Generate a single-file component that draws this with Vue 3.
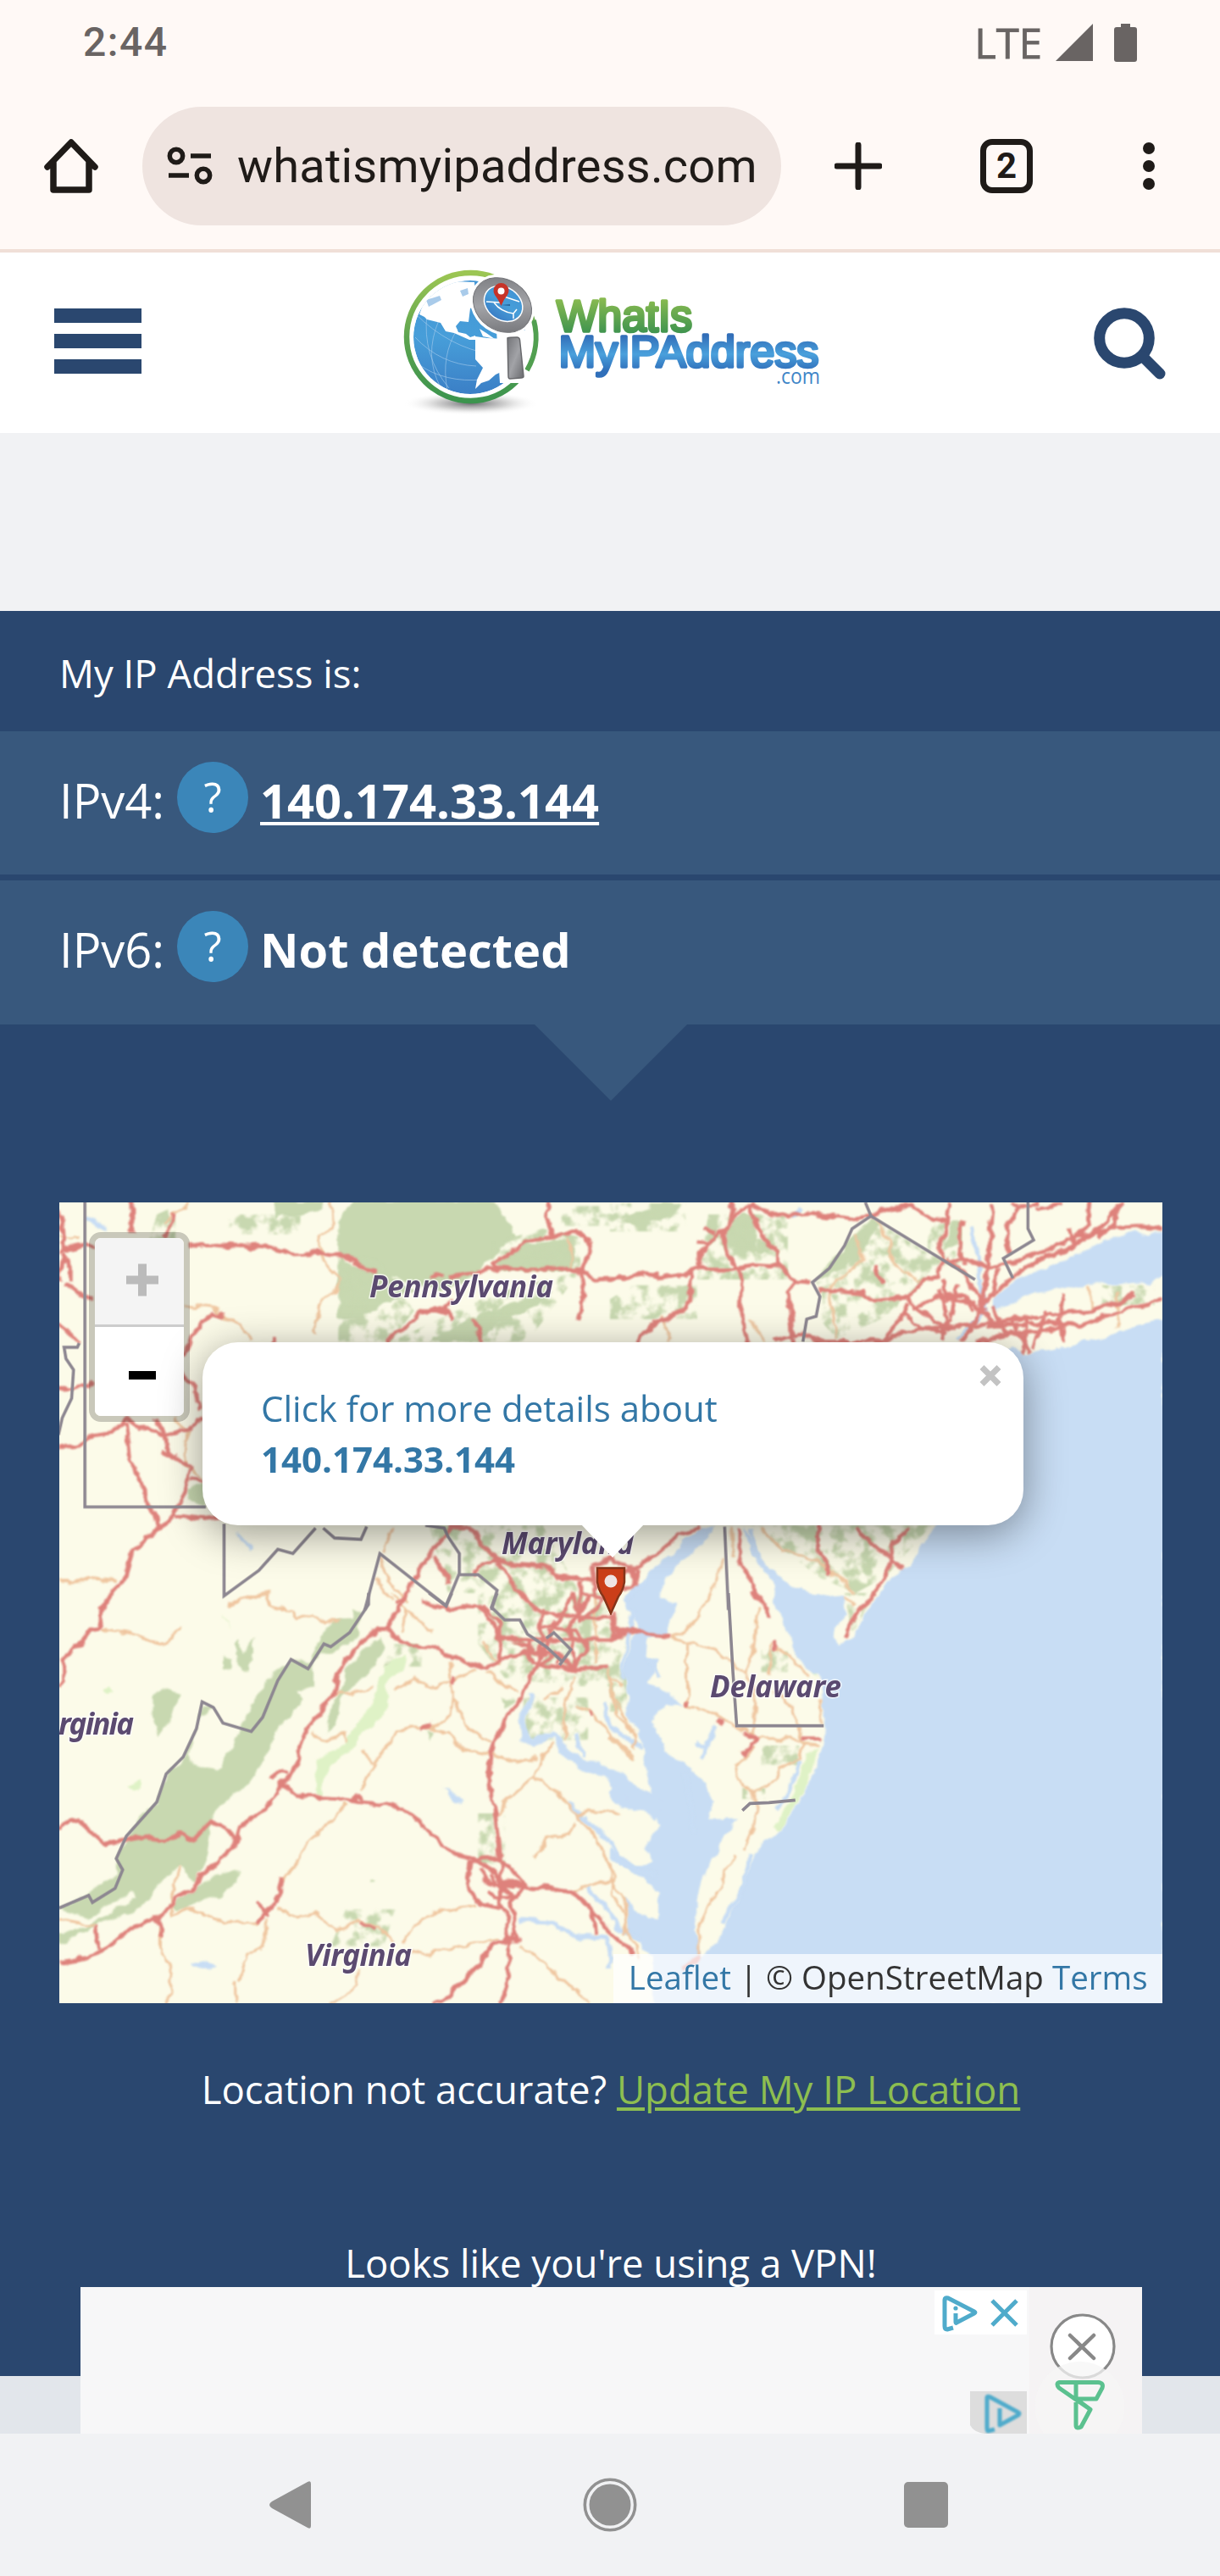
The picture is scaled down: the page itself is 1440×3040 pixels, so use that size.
<script setup>
// Map geometry is stored per quadrant; every quadrant has its own origin.
const origins = { A: [60, 1400], B: [720, 1400], C: [60, 1880], D: [720, 1880] }
const place = (k) => `translate(${origins[k][0]} ${origins[k][1]}) scale(.4464286 .3333333)`

const forests = [
  ['A', 'M590 50H720V80L690 85 650 110 610 105 590 115ZM800 50H1165L1200 110 1230 180 1170 250 1100 330 1030 370 900 320 850 310 800 260 760 250V130ZM1175 260L1240 210 1380 190 1385 290 1290 300 1190 300ZM760 250L850 310 900 320 960 370 880 420 800 480 760 460ZM1000 550L1100 470 1200 420 1330 370 1260 440 1190 480 1130 550ZM360 1080L400 1050 410 1130 365 1110ZM1510 120L1560 90V150Z'],
  ['B', 'M30 120L70 90 150 60 190 70 160 110 70 140ZM300 150L350 90 380 110 390 230 340 240 310 200ZM390 190L430 200 420 240 390 240ZM900 130L930 130 920 200 880 230ZM650 170L690 110 710 140 660 240 560 330 545 330 600 240Z'],
  ['C', 'M720 140L760 90 800 95 795 50 820 65 815 150 760 200 720 215 690 260V340L655 345 670 380 600 480 570 570 530 670 490 700 430 780 420 880 410 960 380 1030 340 960 300 1010 240 1110 120 1180 20 1245V1210L90 1180 225 1080 215 1060 150 1110 100 1150 22 1115 100 1060 170 1000V940L230 800 280 740 310 630 355 580 390 450 400 400 430 400 410 440 390 450 362 600 440 625 480 540 500 480 530 400 560 330 600 270 640 240 690 250ZM870 150L885 190 860 250 800 330 770 370 750 470 725 490 735 430 770 330 780 270ZM270 360L310 335 340 355 320 450 285 510 270 430ZM450 220L480 230 475 275 450 265ZM490 180L500 160 505 220 540 155 520 270 500 270ZM430 1000L490 980 500 1010 450 1070 330 1130 320 1100ZM1195 370L1225 380 1200 410ZM1000 480L1020 490 1000 525ZM850 1010L860 1015 845 1030Z'],
]
const speckles = [
  ['A', 'M760 250H860L960 440 900 550H760ZM1170 200L1300 150 1400 180V300H1170ZM900 550L1170 380 1400 300 1260 550ZM1350 70H1568V140H1350ZM470 100H660V170H470ZM280 100L330 70V190H260ZM1000 1200H1300L1400 1440H1050Z'],
  ['B', 'M0 60H200V160H0ZM260 100H470V330H230ZM540 330L690 110 870 260 800 380 560 370ZM560 370H780L750 450 600 540 560 480ZM60 350H230V470H0V400ZM370 1200H850L730 1380 650 1440 560 1390 420 1250ZM840 130H930V280H840ZM1300 350H1440V420H1300ZM980 1200H1150V1320Z'],
  ['C', 'M1130 0H1500V330H1380L1200 300 1130 180ZM1250 370H1420V520H1250ZM780 1120H910L880 1250H740ZM1130 780H1200V960H1130ZM900 180H980V260H880Z'],
  ['D', 'M0 150H45V420H0ZM400 200H470V280H400ZM400 540H500V610H400ZM350 690H410V730H350ZM620 0H700L640 150Z'],
]
const meadows = [
  ['C', 'M880 260L940 220 930 270 890 310V410L830 500 770 580 725 640 710 720 700 710 705 590 780 530 850 390ZM140 340L160 325 175 345 150 358ZM205 685L240 665V690L215 702ZM450 70L475 130 460 100Z'],
  ['D', 'M540 260L550 258 545 300ZM550 550L520 690 450 840 437 825 480 730 520 570Z'],
]
const water = [
  ['D', 'M1465 -970L1400 -950 1300 -905 1200 -870 1100 -845 1060 -870 1000 -820 900 -500 860 -235 830 -180 800 -100 740 -50 715 0 680 60 640 160 600 185 593 150 625 70 620 15 575 20 530 0 450 -50 400 -130 370 -210 355 -240 370 -150 400 -90 430 -40 440 60 470 140 480 200 520 260 550 290 560 400 570 450 560 540 540 640 510 720 450 840 400 880 370 960 350 1040 320 1140 270 1260 235 1290V1460H1465Z'],
  ['D', 'M280 -240L200 -200 170 -140 120 -90 70 -20 30 20 70 100 50 200 35 280 50 370 45 430 75 500 90 580 110 710 60 670 0 640V740L50 760 120 780 137 820 110 880 90 910 110 960 60 960 0 900V940L90 1010 130 1060V1160L80 1140 40 1080 50 1200 110 1290V1460H240V1280L220 1160 250 1000 300 870 340 800 260 800 280 740 230 640 200 620 150 560 110 450 150 390 200 400 150 350 100 320 130 230 95 220 100 160 150 150V110L180 40 130 20 150 -60 200 -120 260 -200Z'],
  ['B', 'M1465 160L1370 165 1310 190 1250 230 1200 260 1150 290 1070 330 1010 400V440L1040 430 1110 380 1170 370 1250 345 1330 345 1430 340 1465 310Z'],
  ['C', 'M1270 350L1235 440 1245 530 1280 545 1330 500 1350 570 1400 630 1480 660 1530 740 1600 800 1620 740 1560 700 1510 640 1450 600 1400 590 1360 530 1330 480 1270 520 1255 450 1280 360ZM1040 690L1060 700 1090 740 1070 745ZM370 1315L410 1300 440 1320 400 1335Z'],
]
const rivers = [
  ['B', 'M955 140L975 250 978 330 990 440 920 540M500 70L490 110M375 1210L385 1310M40 1460L90 1400M200 1250L250 1230'],
  ['C', 'M1370 740L1410 800 1480 880 1510 960 1600 1000M1420 1040L1460 1110 1500 1180 1560 1230M1240 1160L1340 1170 1390 1220 1470 1220 1480 1320M1460 380L1480 470 1560 550M1390 500L1410 580M1540 60L1510 300'],
  ['D', 'M100 230L130 300M280 470L240 590M250 550L230 520M440 770L480 680 500 600M370 930L350 1050 300 1170M200 640L225 850'],
  ['A', 'M95 110L150 150M490 1230L530 1290'],
]
const minor = [
  ['A', 'M300 130L340 80 370 57M740 57L745 150 710 180 715 250 770 330 755 380 710 410 700 520M355 420L430 430 490 490 530 550M20 180L80 185M20 1400L80 1400 100 1390 170 1400M330 820L360 870 355 990 400 1040M870 1310L890 1400 950 1470M860 1390L900 1470M470 1480L570 1430 580 1490M1370 180L1380 290M900 1210L880 1300'],
  ['B', 'M700 120L740 200 750 270 830 340M650 170L670 260 580 360 600 540M1255 350L1280 440M1340 370V500M370 470L410 550M140 460L160 550M400 1210L460 1290 540 1320 580 1360 650 1440M300 1320L250 1490M320 1210L325 1310'],
  ['C', 'M130 130L200 140 240 160 300 180 340 130M570 0L580 45 640 60 650 95 690 75 730 105 765 95M470 50L510 20 570 0M900 0L940 60 1010 140M940 60L930 140M910 340L960 300 1000 335 1060 310 1120 265M750 355L800 355 850 335M690 490L720 525 780 500 785 525M820 700L860 600 910 500 950 475 1010 470 1060 430 1065 370 1055 240M1065 380L1110 480 1165 530M1000 470L1050 500 1090 550 1165 570 1230 600 1285 580M820 560L855 600M780 745L720 835 680 870 650 960 610 1020M340 960L320 1060 320 1150 360 1115M20 1155L120 1180M360 1115L440 1155 480 1165 550 1165M570 1150L560 1250 520 1280 500 1370M290 1180V1260L320 1350V1420L300 1452M490 1370V1452M600 1120L650 1145 700 1130 750 1190 820 1160 880 1190 905 1240M930 1240L950 1190 1010 1130 1120 1105M955 1265L1000 1285 1050 1260 1180 1225M820 1330L810 1390 740 1452M1240 1245L1430 1452M1330 530L1300 570 1275 650 1200 740 1180 790M1275 650L1340 710 1390 780 1440 860 1480 970 1490 1010 1480 1070 1520 1140 1520 1210M1390 790L1420 770 1500 775M1390 810L1370 850 1310 870 1280 940M1490 1010L1380 1055M1470 270L1490 370 1550 520M1430 420L1480 500 1540 580M1360 520L1355 400 1390 300M1390 400L1430 420M1150 280L1230 350M1140 170L1190 260M1300 380L1350 340M1440 0V250'],
  ['D', 'M270 0L215 120 165 155 205 175 205 400 250 415 330 470 380 500M205 175L280 200 300 230 360 285 380 200 390 50M425 180V290M440 190L480 240 530 295M360 285L385 380 380 500M430 340L480 400 500 470 505 530 550 545M555 370L560 470M390 515H480L510 530 500 590 450 620 440 660 385 700 335 660 330 610 380 545M385 700V830L350 910M330 930L300 1010 260 1100 235 1170V1280M0 300L30 330M0 340L20 430 70 510 60 550M0 510L60 590M620 15L650 40M0 775H25M0 960V1010L40 1090 45 1190 80 1290'],
]
const major = [
  ['A', 'M20 60L30 140 35 240 20 340M20 230L90 210 115 215M30 240L50 280 50 340M30 350L110 400M20 490L50 520 75 555M215 57V170M325 100L320 140 295 180M360 215L410 205 460 210 500 215 550 210 580 220 620 230 640 240 710 235 745 245 790 255 830 290 860 310M1310 57L1320 80 1310 110 1330 180M1430 200L1400 165 1380 160 1330 180 1250 195 1210 235 1170 270 1180 290 1230 295 1300 295 1340 285 1400 295 1440 330 1500 325 1568 315M1430 200L1415 260 1400 300 1410 370 1395 480M1050 320L1180 290M1000 320L1040 315M890 550L940 500 970 450 1050 440 1065 465M970 450L1010 435 1040 435 1060 410M1120 465L1140 550M350 600L370 540 395 490 430 450 460 455M345 660L380 710 395 790M20 715L100 710 115 690M20 920L60 930 100 885 160 875 200 825 235 860 260 855 300 885 360 860 400 820M200 840L210 960 250 1090 285 1215 215 1290 195 1380 160 1450 130 1500M275 820L300 870 310 940 370 1000 355 1080 325 1160 285 1220M295 945L325 965M370 1040L400 1045M330 1165L350 1165 400 1175 460 1165M590 530V560M1060 1200L1010 1290 980 1350 940 1440 910 1480M1055 1205L1110 1205 1140 1270 1180 1320 1220 1340 1300 1350 1350 1380 1430 1395M1180 1320L1110 1370M1180 1320L1210 1390 1270 1480M1010 1310L1050 1380 1050 1410M1400 1400L1400 1500M1430 1340L1480 1320 1530 1340 1545 1420M1430 1340L1440 1450'],
  ['B', 'M0 325L40 325 90 305 140 325 180 315 225 295 320 295 380 280 450 285 490 335 525 340M325 57L310 140 235 240V290M365 57L320 110 300 170 310 240 350 320 345 450 370 550M365 57L390 150 440 240V285M250 150L280 165M230 195L260 200M215 300V400L160 470 120 480 70 550M215 350V400M490 335L470 370 485 550M370 57L430 105 520 95 640 115 690 105 740 75 800 65 840 105 890 125 900 60M890 125L870 220 880 260 960 265 1000 285M1010 57L1005 130 1000 290 980 420M1140 57L1080 80 1055 130 1050 240M1080 80L1060 57M930 125L925 240 940 280M1130 80L1200 65M1270 57L1265 140 1200 200 1120 245 1060 275M1355 57L1300 140 1220 215 1150 250 1060 320 1010 390M1460 150L1400 140 1330 145 1270 170 1215 180M1215 150L1230 215M1340 60L1335 130 1290 180M1000 290L1060 270M550 375L590 370 670 380 700 400 790 390 830 330 870 320 880 260M700 280L720 350M1030 290L1010 370 980 430 960 490 930 550M880 330L890 400 960 410 1010 480M790 390L810 430 860 480 910 500M790 410L770 470 720 540M780 450L830 510 880 520M800 430L860 390 940 385 960 440M870 370L890 440 880 540M920 350L900 470 860 520M430 550L500 520 560 550 700 550 820 510 960 490 1040 480 1120 460 1280 440 1390 385M1000 500L1150 480 1240 495 1380 430 1460 405M1030 530L1100 515 1200 500M1060 470L1110 590M1200 380L1190 470 1200 550M1100 470L1090 590M1010 430L1050 530 970 550M890 250L970 370 990 440M1150 440L1120 580M550 1200V1290L580 1370M650 1210L740 1320 780 1355M790 1210L750 1260 740 1330 720 1400 660 1500M240 1210L180 1230 120 1300 50 1360 0 1410M345 1210V1340L380 1420 410 1500M0 1420L60 1420 70 1350M440 100V110'],
  ['C', 'M165 0L140 50 125 125 100 130 80 185 60 190 35 240V310L20 335M940 0L920 60 890 130 860 130 820 175 760 280 750 350 710 430 665 500 655 590 625 660 610 680 560 760 500 835 490 880 465 930 400 1000 380 1040 330 1080 300 1130 270 1150 190 1210 140 1270 90 1290 20 1305M890 130L950 185 1010 190 1050 220 1150 265 1190 245 1250 205 1320 210M610 680L665 720 760 725 810 740 900 750 960 790 1010 860 1060 920 1120 940 1160 980 1190 1010 1250 1040 1330 1045 1380 1060 1440 1130 1480 1200 1540 1280M590 660L600 635 625 640M800 740L810 710 825 730M20 830L60 800 100 840 145 890 195 870 250 860 300 885 345 850 380 870 425 805 470 840 490 880M120 1180L130 1265M275 1150L295 1180 290 1210M610 1010L600 1090 570 1130 545 1165M550 1100L580 1140M1380 0L1330 120 1280 270 1240 370 1200 450 1165 550 1160 680 1175 790 1190 960 1190 1100 1205 1130V1220L1170 1240 1130 1320 1050 1430 1010 1452M1110 940L1100 1040 1130 1100 1190 1115M1110 945L1180 940 1220 980 1250 1030 1220 1100 1230 1200 1215 1240 1205 1390 1190 1452M1190 1230H1240L1230 1200M1160 1000L1200 1050 1230 1080 1180 1080 1150 1050M1140 980L1145 1020 1250 1040M1430 1120L1440 1210M1240 0L1290 70 1370 80 1480 90M980 35L1030 50 1130 50 1190 150 1280 200M1140 50L1190 110 1180 160 1290 165 1480 165 1530 125M1300 60L1290 260M1430 0L1370 120 1390 270 1470 260M1490 60L1490 130 1568 140M1190 120V240M1280 270L1330 210 1380 260 1420 200 1390 130 1300 120M1260 160L1270 250 1390 270M1340 210L1340 250M1380 0L1400 100 1480 0M1400 0L1480 20M1070 290L1065 320M980 475L1005 465M1430 420V440M820 1165L860 1190'],
  ['D', 'M0 70L10 150 60 120 95 145 160 155M0 150H40L60 120M375 0L410 50 420 90M430 170L440 200M700 0L650 80 620 160M205 380V400M280 450L300 460M355 500L380 505 390 520 350 570M505 515H555M0 1200L60 1280M240 1280L190 1330'],
]
const borders = [
  ['A', 'M90 50V1135H410M75 555L70 570 35 570 40 610 60 650 55 750 30 820 20 880M458 1195V1450L550 1360 600 1285 640 1300 700 1210M720 1210L750 1245 820 1250 835 1205M830 1500L870 1300 1045 1485 1080 1370V1300L1050 1240 1040 1210 990 1200M1080 1375H1130L1180 1430 1165 1500'],
  ['B', 'M675 57L690 105 640 150 620 210 580 290 535 340 555 390 545 460 520 470 510 550M690 105L965 330M1105 50V150L1120 190 1040 255 1065 325M303 1205L313 1500'],
  ['C', 'M840 0V40L790 140 740 190 722 180 680 268 635 235 600 310 560 440 530 490 455 460 430 405 400 385 385 480 350 580 305 640 280 740 200 860 173 940 190 980 170 1045 110 1095 100 1070 22 1115M1000 0L1045 45 1060 0M1180 0L1165 50 1200 95H1240L1260 145 1310 190 1350 240M1310 160L1330 140 1375 200 1345 255'],
  ['D', 'M313 0L325 280 335 470H565M350 770L370 745 420 742 490 733'],
]
const layers = [
  { cls: 'forest', items: forests },
  { cls: 'speckle', items: speckles },
  { cls: 'meadow', items: meadows },
  { cls: 'sea', items: water },
  { cls: 'river', items: rivers },
  { cls: 'minor', items: minor },
  { cls: 'major', items: major },
  { cls: 'border', items: borders },
]
const rows = [
  { label: 'IPv4:', value: '140.174.33.144', link: true },
  { label: 'IPv6:', value: 'Not detected', link: false },
]
</script>

<template>
  <div class="phone">
    <div class="status">
      <span class="clock">2:44</span>
      <span class="lte">LTE</span>
      <svg class="signal" width="44" height="44" viewBox="0 0 44 44"><path d="M44 0V44H0Z" /></svg>
      <svg class="battery" width="27" height="45" viewBox="0 0 27 45"><path d="M8 0H19V4H24Q27 4 27 7V42Q27 45 24 45H3Q0 45 0 42V7Q0 4 3 4H8Z" /></svg>
    </div>

    <div class="browser">
      <svg class="home" width="64" height="66" viewBox="0 0 64 66"><path d="M4 34L32 5 60 34M11 28V61H53V28" /></svg>
      <div class="omnibox">
        <svg class="tune" width="54" height="46" viewBox="0 0 54 46">
          <circle cx="11" cy="11" r="7.7" /><path d="M28 11H52M2 34H26" /><circle cx="43" cy="34" r="7.7" />
        </svg>
        <span class="url">whatismyipaddress.com</span>
      </div>
      <svg class="plus" width="56" height="56" viewBox="0 0 56 56"><path d="M28 3V53M3 28H53" /></svg>
      <div class="tabs"><span>2</span></div>
      <svg class="dots" width="14" height="56" viewBox="0 0 14 56"><circle cx="7" cy="7" r="7" /><circle cx="7" cy="28" r="7" /><circle cx="7" cy="49" r="7" /></svg>
    </div>

    <header class="site">
      <div class="burger"><i></i><i></i><i></i></div>
      <svg class="logo" width="560" height="200" viewBox="0 0 560 200">
        <defs>
          <linearGradient id="ring" x1="0" y1="0" x2="0" y2="1"><stop offset="0" stop-color="#9cc653" /><stop offset=".5" stop-color="#5da450" /><stop offset="1" stop-color="#3c944e" /></linearGradient>
          <linearGradient id="globe" x1="0" y1="0" x2="0" y2="1"><stop offset="0" stop-color="#4295d5" /><stop offset=".5" stop-color="#479ed9" /><stop offset="1" stop-color="#3b7fc6" /></linearGradient>
          <linearGradient id="steel" x1="0" y1="0" x2="1" y2="1"><stop offset="0" stop-color="#747579" /><stop offset=".5" stop-color="#a2a3a7" /><stop offset="1" stop-color="#68696d" /></linearGradient>
          <linearGradient id="leaf" gradientUnits="userSpaceOnUse" x1="0" y1="53" x2="0" y2="93"><stop offset="0" stop-color="#88ba50" /><stop offset="1" stop-color="#3f944f" /></linearGradient>
          <linearGradient id="sky" gradientUnits="userSpaceOnUse" x1="0" y1="96" x2="0" y2="145"><stop offset="0" stop-color="#326eb8" /><stop offset=".45" stop-color="#49a0dc" /><stop offset=".85" stop-color="#306fba" /></linearGradient>
          <radialGradient id="shade"><stop offset="0" stop-color="#6b6b70" /><stop offset=".5" stop-color="#bbb" stop-opacity=".7" /><stop offset="1" stop-color="#fff" stop-opacity="0" /></radialGradient>
          <clipPath id="ball"><circle cx="115" cy="98" r="67" /></clipPath>
        </defs>
        <ellipse cx="116" cy="176" rx="80" ry="14" fill="url(#shade)" />
        <circle cx="115.500" cy="97.500" r="75.500" fill="#fff" stroke="url(#ring)" stroke-width="6.500" />
        <g clip-path="url(#ball)">
          <circle cx="115" cy="98" r="67" fill="url(#globe)" />
          <g class="grid"><path d="M64 70Q58 120 90 158M78 78Q60 120 80 157M100 88Q80 120 88 160M50 98Q80 130 122 132M54 130Q85 152 130 148M50 70Q90 110 140 118" /></g>
          <path class="land" d="M70 48Q80 34 96 32L120 33 122 60 115 64 113 80 103 79 98 85 101 92 110 94 115 98 121 96 121 101 114 101 96 93 86 91 80 81 64 77 61 74 55 71 60 57Z" />
          <path class="land" d="M121 97L135 99 158 100V136L145 142 137 149 128 152 121 159 123 148 130 134 121 124Z" />
          <path class="land" d="M126 88L134 93 144 100 130 97Z" />
          <path class="lake" d="M103 43L112 40 113 47 106 50ZM63 54L79 49 81 54 66 62Z" />
        </g>
        <path d="M146 90H182V112L176 152H150Z" fill="#fff" />
        <path d="M181 76L194 82 192 110 183 138 184 150 172 154Z" fill="#fff" />
        <path d="M190 78A77 77 0 0 1 182 137" fill="none" stroke="#519f50" stroke-width="6" />
        <path d="M159 99Q161 98 170 98 173 98 173.500 101L178 144Q178 146 175 146L162 147Q160 147 160 144Z" fill="url(#steel)" stroke="#68696c" stroke-width="1.500" />
        <g transform="rotate(35 153 60)">
          <ellipse cx="153" cy="60" rx="40" ry="34" fill="#fff" />
          <ellipse cx="153" cy="60" rx="36.500" ry="30" fill="url(#steel)" stroke="#737478" />
          <ellipse cx="153" cy="58" rx="25" ry="20" fill="#fff" />
          <ellipse cx="153" cy="58" rx="23.500" ry="18.500" fill="url(#globe)" />
        </g>
        <path d="M134 56L150 57M143 57Q151 68 166 70L170 65M155 50L173 56M166 70V76" fill="none" stroke="#fff" stroke-width="1.500" />
        <path d="M151 60L162 59V61Z" fill="#24639b" />
        <path d="M151.500 61Q148 53 144 48A9 9 0 1 1 159 48Q154 54 151.500 61Z" fill="#c73328" /><circle cx="151.500" cy="43.500" r="4" fill="#fff" />
        <text class="brand" x="217" y="90.500" textLength="160" lengthAdjust="spacingAndGlyphs" fill="url(#leaf)" stroke="url(#leaf)">WhatIs</text>
        <text class="brand" x="219.500" y="133" textLength="307" lengthAdjust="spacingAndGlyphs" fill="url(#sky)" stroke="url(#sky)">MyIPAddress</text>
        <text class="dotcom" x="476" y="153" textLength="52" lengthAdjust="spacingAndGlyphs">.com</text>
      </svg>
      <svg class="search" width="90" height="90" viewBox="0 0 90 90"><circle cx="37" cy="37" r="29.300" /><path d="M59 59L79 79" /></svg>
    </header>

    <div class="banner"></div>

    <main class="panel">
      <h2 class="lead">My IP Address is:</h2>
      <div v-for="r in rows" :key="r.label" class="row">
        <span class="proto">{{ r.label }}</span>
        <span class="help">?</span>
        <a v-if="r.link" class="value link">{{ r.value }}</a>
        <span v-else class="value">{{ r.value }}</span>
      </div>
      <svg class="notch" width="180" height="90" viewBox="0 0 180 90"><path d="M0 0H180L90 90Z" /></svg>

      <section class="map">
        <svg class="tiles" width="1302" height="945" viewBox="70 1419 1302 945">
          <defs>
            <filter id="rough" filterUnits="userSpaceOnUse" x="60" y="1409" width="1322" height="965">
              <feTurbulence type="fractalNoise" baseFrequency=".055" numOctaves="3" seed="4" result="n" />
              <feDisplacementMap in="SourceGraphic" in2="n" scale="11" xChannelSelector="R" yChannelSelector="G" />
              <feGaussianBlur stdDeviation=".9" />
            </filter>
            <filter id="patchy" filterUnits="userSpaceOnUse" x="60" y="1409" width="1322" height="965">
              <feTurbulence type="fractalNoise" baseFrequency=".06" numOctaves="4" seed="9" />
              <feColorMatrix values="0 0 0 0 0 0 0 0 0 0 0 0 0 0 0 5 0 0 0 -2.200" result="m" />
              <feComposite in="SourceGraphic" in2="m" operator="in" />
              <feGaussianBlur stdDeviation="1" />
            </filter>
          </defs>
          <rect x="70" y="1419" width="1302" height="945" fill="#fcfbe9" />
          <g v-for="l in layers" :key="l.cls" :class="l.cls">
            <g v-for="([k, d], i) in l.items" :key="i" :transform="place(k)"><path :d="d" vector-effect="non-scaling-stroke" /></g>
          </g>
          <g class="names">
            <text x="436" y="1530.500" textLength="217">Pennsylvania</text>
            <text x="592" y="1833.500" textLength="156">Maryland</text>
            <text x="838" y="2002.500" textLength="155">Delaware</text>
            <text x="360" y="2319.500" textLength="126">Virginia</text>
            <text x="69" y="2046.500" textLength="89">rginia</text>
          </g>
        </svg>
        <svg class="marker" width="36" height="57" viewBox="0 0 36 57"><path d="M2 1.500H34V18Q32 29 27 35L18 55 9 35Q4 29 2 18Z" /><circle cx="18" cy="17" r="7.500" /></svg>
        <div class="zoom">
          <svg class="in" viewBox="0 0 105 102"><path d="M37 49.500H75M56 30.500V68.500" /></svg>
          <svg class="out" viewBox="0 0 105 105"><path d="M40 57H72" /></svg>
        </div>
        <div class="popup">
          <svg class="close" width="26" height="25" viewBox="0 0 26 25"><path d="M3 2.500L23 22.500M23 2.500L3 22.500" /></svg>
          <a>Click for more details about<br /><b>140.174.33.144</b></a>
        </div>
        <div class="credit"><a>Leaflet</a> | © OpenStreetMap <a>Terms</a></div>
      </section>

      <p class="note">Location not accurate? <a>Update My IP Location</a></p>
      <p class="vpn">Looks like you're using a VPN!</p>
    </main>
    <div class="below"></div>

    <aside class="ad">
      <svg width="1253" height="173" viewBox="0 0 1253 173">
        <rect width="1253" height="173" fill="#f7f7f8" />
        <rect x="1120" width="133" height="173" fill="#f5f3f4" />
        <rect x="1008" y="4" width="109" height="52" fill="#fff" />
        <g class="choice">
          <path d="M1030 48L1023 50Q1020 50 1020 46V15Q1020 12 1024 13L1055 29Q1057 30 1055 31L1034 42Q1033 43 1033 41V31" /><circle cx="1033" cy="25" r="2.600" />
          <path d="M1076 16L1105 45M1105 16L1076 45" />
        </g>
        <path d="M1050 123H1117V173H1067Q1054 171 1050 163Z" fill="#ddd" />
        <g class="choice soft"><path d="M1079 168L1071 170Q1070 170 1070 166V131Q1070 128 1074 130L1107 148Q1109 149 1107 151L1085 163V143" /></g>
        <circle cx="1183" cy="70" r="37" fill="#fff" stroke="#888" stroke-width="3.200" />
        <path d="M1168 57L1196 84M1196 57L1168 84" stroke="#888" stroke-width="4.500" stroke-linecap="round" />
        <circle cx="1179.500" cy="141" r="53" fill="#f6f6f6" opacity=".75" />
        <path class="funnel" d="M1192 144.500L1155 119Q1151 114 1155 112.500H1201Q1208 113 1206 119L1199 132H1175V113M1175 132L1192 144.500 1181 165Q1175 168 1175 163V136" />
      </svg>
    </aside>

    <nav class="nav">
      <svg width="1440" height="168" viewBox="0 0 1440 168">
        <path d="M367 59V109Q367 113 363 111L321 88Q315 84 321 80L363 57Q367 55 367 59Z" />
        <circle cx="720" cy="84" r="24.500" /><circle cx="720" cy="84" r="29.700" fill="none" stroke="#919191" stroke-width="3.600" />
        <rect x="1067" y="57" width="52" height="54" rx="5" />
      </svg>
    </nav>
  </div>
</template>

<style>
body { margin: 0; }
</style>

<style scoped>
.phone { width: 1440px; height: 3040px; position: relative; display: flex; flex-direction: column; font-family: "Open Sans", sans-serif; background: #fff; overflow: hidden; }
.status { height: 100px; background: #fff9f6; display: flex; align-items: center; box-sizing: border-box; padding: 0 98px; color: #696463; }
.status svg { fill: #696463; }
.clock { font: 500 48px/102px Roboto, sans-serif; letter-spacing: 1.500px; flex: 1; }
.lte { font: 400 49px/102px "Open Sans", sans-serif; -webkit-text-stroke: .8px #696463; margin-right: 16px; }
.signal { margin-right: 25px; }
.browser { height: 194px; background: #fff9f6; border-bottom: 4px solid #f0dfd7; display: flex; align-items: center; box-sizing: border-box; height: 198px; padding-bottom: 2px; }
.home { margin-left: 52px; margin-right: 52px; fill: none; stroke: #1f1b18; stroke-width: 7.500; stroke-linejoin: round; stroke-linecap: round; }
.omnibox { width: 754px; height: 140px; border-radius: 70px; background: #efe4e0; display: flex; align-items: center; }
.tune { margin-left: 29px; fill: none; stroke: #1f1b18; stroke-width: 5.500; }
.url { margin-left: 29px; font: 400 56px/140px Roboto, sans-serif; letter-spacing: .2px; color: #1f1b18; white-space: nowrap; }
.plus { margin-left: 63px; fill: none; stroke: #1f1b18; stroke-width: 7; stroke-linecap: round; }
.tabs { width: 48px; height: 50px; border: 7px solid #1f1b18; border-radius: 14px; margin-left: 116px; display: flex; align-items: center; justify-content: center; color: #1f1b18; font: 700 42px/50px Roboto, sans-serif; }
.dots { margin-left: 130px; fill: #1f1b18; }
.site { height: 213px; display: flex; background: #fff; }
.burger { width: 103px; margin: 66px 0 0 64px; display: flex; flex-direction: column; gap: 13px; }
.burger i { height: 17px; background: #2a476f; }
.logo { margin: 2px 0 0 273px; }
.search { margin: 64px 0 0 290px; fill: none; stroke: #2a476f; stroke-width: 13; stroke-linecap: round; }
.brand { font-family: "Liberation Sans", Arial, sans-serif; font-size: 51px; font-weight: 400; stroke-width: 3.600; stroke-linejoin: round; }
.dotcom { font-family: "Open Sans", sans-serif; font-size: 26px; fill: #3f86c8; }
.grid path { fill: none; stroke: #a8cdec; stroke-width: 1; opacity: .6; }
.land { fill: #fff; }
.lake { fill: #a9cbea; }
.banner { height: 210px; background: #f1f2f4; }
.panel { height: 2083px; background: #2a476f; color: #fff; }
.lead { margin: 0; height: 142px; padding: 0 0 0 70px; font-size: 45.500px; line-height: 146px; font-weight: 400; box-sizing: border-box; }
.row { height: 169px; margin-bottom: 7px; background: #38587d; display: flex; box-sizing: border-box; padding-left: 70px; font-size: 56px; line-height: 163px; }
.row + .row { margin-bottom: 0; height: 170px; }
.proto { width: 139px; }
.help { width: 84px; height: 84px; border-radius: 50%; background: #3b86b9; font-size: 49px; line-height: 82px; text-align: center; margin-top: 36px; }
.value { font-weight: 700; margin-left: 14px; }
.link { text-decoration: underline; text-decoration-thickness: 4px; text-underline-offset: 4px; }
.notch { display: block; margin-left: 631px; fill: #38587d; }
.map { margin: 120px 0 0 70px; width: 1302px; height: 945px; position: relative; overflow: hidden; }
.tiles { display: block; }
.forest, .speckle, .meadow, .sea, .river, .minor, .major { filter: url(#rough); }
.forest { fill: #c8d8b0; }
.speckle { fill: #c8d8b0; filter: url(#patchy); }
.meadow { fill: #dff2c6; }
.sea { fill: #c8ddf4; }
.river { fill: none; stroke: #c8ddf4; stroke-width: 5px; }
.minor { fill: none; stroke: #efc6a0; stroke-width: 3px; }
.major { fill: none; stroke: #de827c; stroke-width: 4.800px; stroke-linejoin: round; }
.border { fill: none; stroke: #8d8791; stroke-width: 3.600px; }
.names text { font: italic 700 35px "Noto Sans", sans-serif; fill: #5b4a70; stroke: #fff; stroke-opacity: .7; stroke-width: 3px; paint-order: stroke; }
.marker { position: absolute; left: 633px; top: 430px; fill: #cb3e19; stroke: #86351a; stroke-width: 2.500; }
.marker circle { fill: #efe4e4; stroke: none; }
.zoom { position: absolute; left: 35px; top: 35px; width: 105px; height: 210px; border: 7px solid rgba(0, 0, 0, .2); border-radius: 14px; background-clip: padding-box; display: flex; flex-direction: column; }
.zoom svg { display: block; width: 105px; fill: none; stroke-width: 10; }
.in { height: 102px; background: #f4f4f4; border-bottom: 3px solid #ccc; border-radius: 7px 7px 0 0; stroke: #bbb; }
.out { height: 105px; background: #fff; border-radius: 0 0 7px 7px; stroke: #000; }
.popup { position: absolute; left: 168.500px; top: 165px; width: 969.500px; height: 216px; box-sizing: border-box; padding: 48px 0 0 69.500px; border-radius: 42px; background: #fff; box-shadow: 0 10px 49px rgba(0, 0, 0, .4); font-size: 42px; line-height: 59.500px; color: #3377a6; }
.popup::after { content: ""; position: absolute; left: 447px; top: 215px; border: 37.500px solid transparent; border-top: 39px solid #fff; border-bottom: 0; }
.close { position: absolute; right: 26px; top: 27px; stroke: #c3c3c3; stroke-width: 7; }
.credit { position: absolute; right: 0; bottom: 0; width: 648px; height: 58px; padding-right: 17.500px; box-sizing: border-box; background: rgba(255, 255, 255, .7); color: #333; font-size: 38.500px; line-height: 54px; text-align: right; white-space: nowrap; }
.credit a { color: #3377a6; }
.note, .vpn { margin: 69px 0 0; padding-left: 2px; font-size: 45.500px; line-height: 64px; text-align: center; white-space: nowrap; }
.note a { color: #8dbe50; text-decoration: underline; text-decoration-thickness: 4px; text-underline-offset: 4px; }
.vpn { margin-top: 141px; }
.below { height: 68px; background: #e2e6eb; }
.ad { position: absolute; left: 95px; top: 2699px; height: 173px; }
.ad svg { display: block; }
.choice { fill: none; stroke: #4fabcb; stroke-width: 5; stroke-linejoin: round; }
.choice circle { fill: #4fabcb; stroke: none; }
.soft { filter: blur(1px); }
.funnel { fill: none; stroke: #5bc18f; stroke-width: 5; stroke-linejoin: round; }
.nav { height: 168px; background: #f1f2f4; }
.nav svg { display: block; fill: #919191; }
</style>
